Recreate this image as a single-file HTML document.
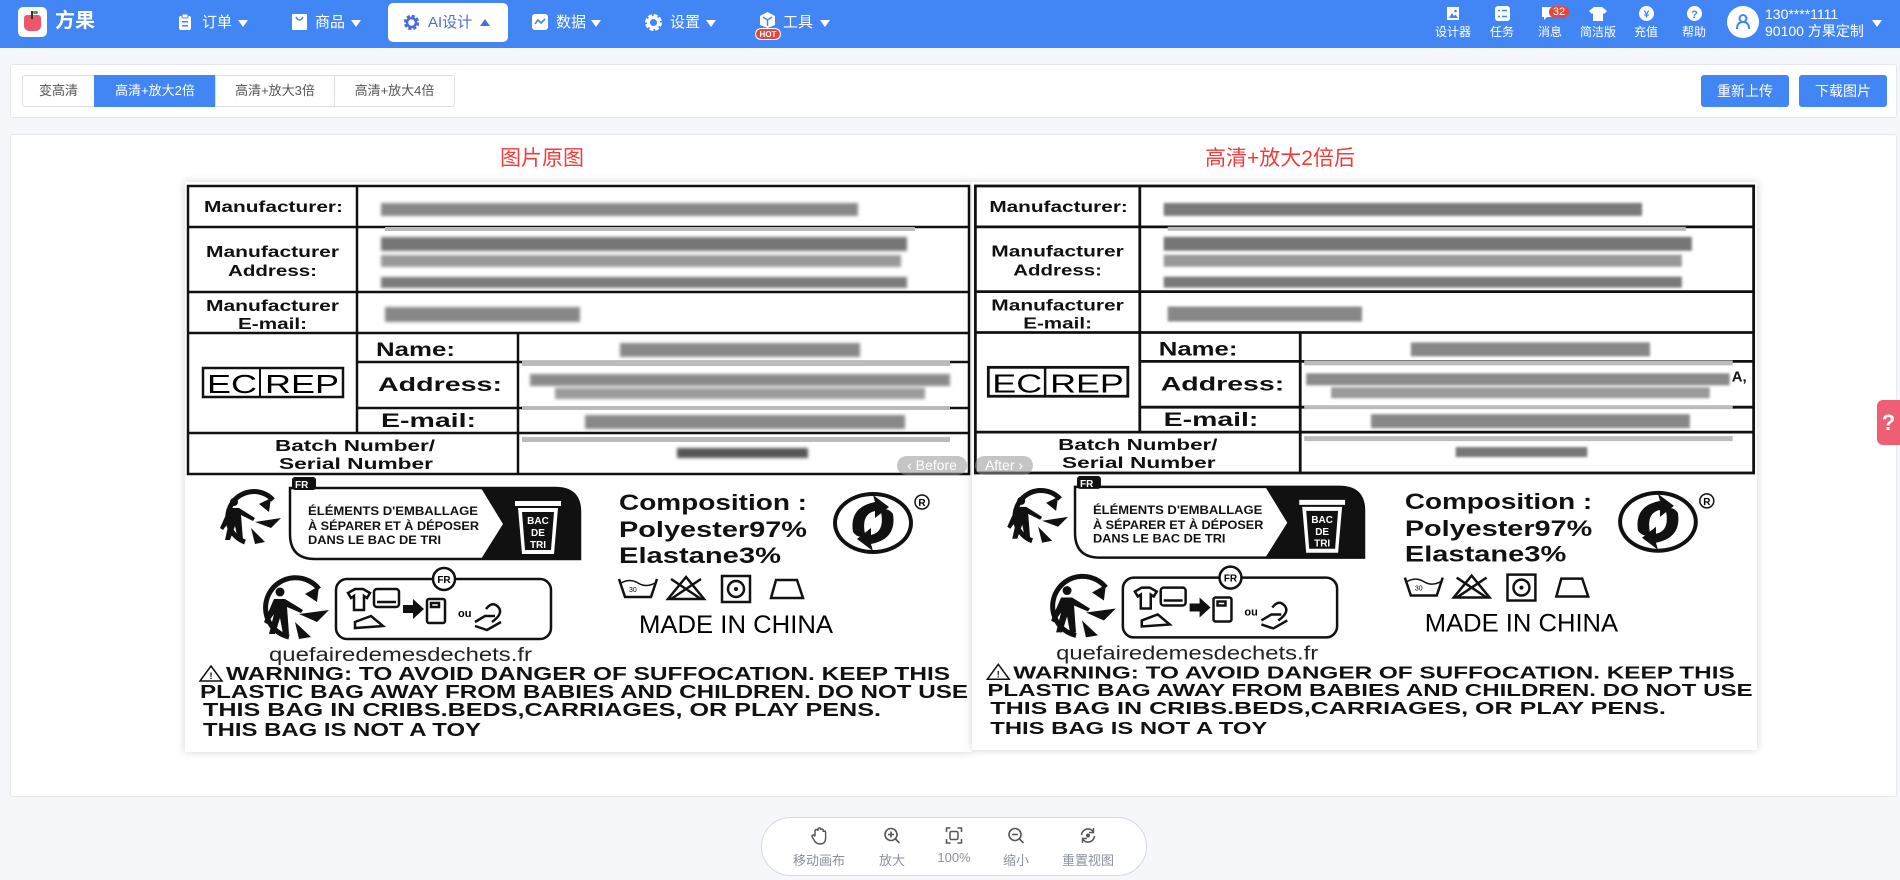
<!DOCTYPE html>
<html><head><meta charset="utf-8">
<style>
*{margin:0;padding:0;box-sizing:border-box}
body{width:1900px;height:880px;background:#f5f7fb;font-family:"Liberation Sans","Noto Sans CJK SC",sans-serif;position:relative;overflow:hidden}
.abs{position:absolute}
.nav{left:0;top:0;width:1900px;height:48px;background:#4285f4;color:#fff}
.nav .t{position:absolute;top:13px;font-size:15px;line-height:20px;color:#fff}
.arr{position:absolute;top:20px;width:0;height:0;border-left:5px solid transparent;border-right:5px solid transparent;border-top:7px solid #fff}
.ri{position:absolute;top:26px;font-size:12px;line-height:13px;color:#fff;transform:translateX(-50%);white-space:nowrap}
.panel{background:#fff;border:1px solid #e4e7ed;border-radius:3px}
.tab{position:absolute;top:75px;height:32px;line-height:30px;font-size:13px;color:#555;text-align:center;border:1px solid #dcdfe6;background:#fff}
.btn{position:absolute;top:75px;height:32px;line-height:32px;width:88px;background:#4285f4;color:#fff;font-size:14px;text-align:center;border-radius:3px}
.lbl{position:absolute;background:#fff;box-shadow:0 0 8px rgba(0,0,0,.18)}
.tb{position:absolute;top:850px;font-size:13px;color:#8a8f99;transform:translateX(-50%);white-space:nowrap}
.ti{position:absolute;top:827px;transform:translateX(-50%)}
</style></head><body>

<div class="abs nav">
  <div class="abs" style="left:18px;top:7px;width:29px;height:30px;background:#fff;border-radius:5px">
    <div class="abs" style="left:6px;top:8px;width:17px;height:16px;background:#f0566a;border-radius:3px 3px 5px 5px"></div>
    <div class="abs" style="left:13px;top:4px;width:2px;height:8px;background:#333"></div>
    <div class="abs" style="left:15px;top:4px;width:5px;height:3px;background:#3a3;border-radius:3px"></div>
  </div>
  <div class="t" style="left:55px;top:11px;font-size:20px;font-weight:bold">方果</div>

  <svg class="abs" style="left:178px;top:14px" width="14" height="17"><rect x="1" y="2" width="12" height="14" rx="2" fill="#fff"/><rect x="4" y="0" width="6" height="4" rx="1" fill="#fff" stroke="#4285f4"/><rect x="4" y="7" width="6" height="1.5" fill="#4285f4"/><rect x="4" y="11" width="6" height="1.5" fill="#4285f4"/></svg>
  <div class="t" style="left:202px">订单</div><div class="arr" style="left:238px"></div>

  <svg class="abs" style="left:292px;top:14px" width="15" height="16"><rect x="0" y="0" width="15" height="16" rx="1" fill="#fff"/><path d="M4 3 Q7.5 9 11 3" stroke="#4285f4" stroke-width="1.6" fill="none"/></svg>
  <div class="t" style="left:315px">商品</div><div class="arr" style="left:351px"></div>

  <div class="abs" style="left:388px;top:3px;width:120px;height:39px;background:#fff;border-radius:5px"></div>
  <svg class="abs" style="left:404px;top:15px" width="15" height="15"><circle cx="7.5" cy="7.5" r="6" fill="none" stroke="#4a6ee0" stroke-width="3.5" stroke-dasharray="3 1.7"/><circle cx="7.5" cy="7.5" r="4.5" fill="none" stroke="#4a6ee0" stroke-width="2.5"/></svg>
  <div class="t" style="left:428px;color:#4a6ee0">AI设计</div>
  <div class="abs" style="left:480px;top:19px;width:0;height:0;border-left:5px solid transparent;border-right:5px solid transparent;border-bottom:7px solid #4a6ee0"></div>

  <svg class="abs" style="left:532px;top:14px" width="16" height="16"><rect width="16" height="16" rx="3" fill="#fff"/><path d="M3 10 L6 6 L9 9 L13 5" stroke="#4285f4" stroke-width="1.6" fill="none"/></svg>
  <div class="t" style="left:556px">数据</div><div class="arr" style="left:591px"></div>

  <svg class="abs" style="left:645px;top:14px" width="17" height="17"><circle cx="8.5" cy="8.5" r="6.5" fill="none" stroke="#fff" stroke-width="4" stroke-dasharray="3.5 1.6"/><circle cx="8.5" cy="8.5" r="5" fill="none" stroke="#fff" stroke-width="3"/></svg>
  <div class="t" style="left:670px">设置</div><div class="arr" style="left:706px"></div>

  <svg class="abs" style="left:759px;top:11px" width="17" height="18"><path d="M8.5 1 L16 5 L16 14 L8.5 17 L1 14 L1 5 Z" fill="#fff"/><path d="M4 6 L8.5 9 L13 6 M8.5 9 V15" stroke="#4285f4" stroke-width="1.5" fill="none"/></svg>
  <div class="abs" style="left:755px;top:28px;width:26px;height:12px;background:#e8453c;border-radius:6px;font-size:8px;font-weight:bold;color:#fff;text-align:center;line-height:12px;border:1px solid #fff">HOT</div>
  <div class="t" style="left:783px">工具</div><div class="arr" style="left:820px"></div>

  <svg class="abs" style="left:1446px;top:6px" width="14" height="15"><rect x="1" y="1" width="12" height="13" fill="#fff"/><path d="M3 12 L6 7 L8 10 L9.5 8.5 L12 12Z" fill="#4285f4"/><circle cx="9.5" cy="5" r="1.3" fill="#4285f4"/></svg>
  <div class="ri" style="left:1453px">设计器</div>
  <svg class="abs" style="left:1495px;top:6px" width="15" height="15"><rect width="15" height="15" rx="3" fill="#fff"/><path d="M3 4.5h2M7 4.5h5M3 10.5h2M7 10.5h5" stroke="#4285f4" stroke-width="1.5"/></svg>
  <div class="ri" style="left:1502px">任务</div>
  <svg class="abs" style="left:1541px;top:6px" width="15" height="16"><path d="M1 1h13v10H6l-3 3v-3H1z" fill="#fff"/></svg>
  <div class="abs" style="left:1549px;top:6px;width:20px;height:12px;background:#e8453c;border-radius:7px;color:#fff;font-size:11px;line-height:12px;text-align:center">32</div>
  <div class="ri" style="left:1550px">消息</div>
  <svg class="abs" style="left:1589px;top:7px" width="18" height="14"><path d="M5 0 L13 0 L18 4 L15 7 L14 6 L14 14 L4 14 L4 6 L3 7 L0 4Z" fill="#fff"/></svg>
  <div class="ri" style="left:1598px">简洁版</div>
  <svg class="abs" style="left:1639px;top:6px" width="15" height="15"><circle cx="7.5" cy="7.5" r="7.5" fill="#fff"/><text x="7.5" y="11.5" font-size="10" font-weight="bold" fill="#4285f4" text-anchor="middle" font-family="Liberation Sans">¥</text></svg>
  <div class="ri" style="left:1646px">充值</div>
  <svg class="abs" style="left:1687px;top:6px" width="15" height="15"><circle cx="7.5" cy="7.5" r="7.5" fill="#fff"/><text x="7.5" y="12" font-size="11" font-weight="bold" fill="#4285f4" text-anchor="middle" font-family="Liberation Sans">?</text></svg>
  <div class="ri" style="left:1694px">帮助</div>

  <div class="abs" style="left:1727px;top:6px;width:32px;height:32px;border-radius:50%;background:#fff"></div>
  <svg class="abs" style="left:1735px;top:13px" width="16" height="17"><circle cx="8" cy="5.5" r="3.5" fill="none" stroke="#4285f4" stroke-width="2"/><path d="M2 16 Q2 9 8 9 Q14 9 14 16" fill="none" stroke="#4285f4" stroke-width="2"/></svg>
  <div class="abs" style="left:1765px;top:6px;font-size:14px;line-height:16px;color:#fff">130****1111</div>
  <div class="abs" style="left:1765px;top:23px;font-size:14px;line-height:16px;color:#fff">90100 方果定制</div>
  <div class="abs" style="left:1872px;top:20px;width:0;height:0;border-left:5px solid transparent;border-right:5px solid transparent;border-top:7px solid #fff"></div>
</div>

<div class="abs panel" style="left:10px;top:64px;width:1887px;height:54px"></div>
<div class="tab" style="left:22px;width:73px;border-radius:3px 0 0 3px">变高清</div>
<div class="tab" style="left:94px;width:122px;background:#4285f4;color:#fff;border-color:#4285f4">高清+放大2倍</div>
<div class="tab" style="left:215px;width:120px">高清+放大3倍</div>
<div class="tab" style="left:334px;width:121px;border-radius:0 3px 3px 0">高清+放大4倍</div>
<div class="btn" style="left:1701px">重新上传</div>
<div class="btn" style="left:1799px">下载图片</div>

<div class="abs panel" style="left:10px;top:134px;width:1887px;height:663px"></div>
<div class="abs" style="left:500px;top:147px;font-size:21px;line-height:24px;color:#f23b3b">图片原图</div>
<div class="abs" style="left:1205px;top:147px;font-size:21px;line-height:24px;color:#f23b3b">高清+放大2倍后</div>

<!-- LEFT LABEL -->
<div class="lbl" style="left:185px;top:182px;width:787px;height:570px">
<svg width="787" height="570" viewBox="0 0 787 570" font-family="Liberation Sans" font-weight="bold">
<defs><filter id="bl" x="-5%" y="-30%" width="110%" height="160%"><feGaussianBlur stdDeviation="1.6"/></filter></defs>
<g stroke="#111" stroke-width="2.5" fill="none">
<rect x="3" y="4" width="781" height="288"/>
<line x1="3" y1="45" x2="784" y2="45"/><line x1="3" y1="110" x2="784" y2="110"/><line x1="3" y1="151" x2="784" y2="151"/>
<line x1="172" y1="180" x2="784" y2="180"/><line x1="172" y1="226" x2="784" y2="226"/><line x1="3" y1="251" x2="784" y2="251"/>
<line x1="172" y1="4" x2="172" y2="251"/><line x1="333" y1="151" x2="333" y2="292"/>
</g>
<g fill="#111" font-size="16">
<text x="19" y="30" textLength="139" lengthAdjust="spacingAndGlyphs">Manufacturer:</text>
<text x="21" y="75" textLength="133" lengthAdjust="spacingAndGlyphs">Manufacturer</text>
<text x="43" y="94" textLength="89" lengthAdjust="spacingAndGlyphs">Address:</text>
<text x="21" y="129" textLength="133" lengthAdjust="spacingAndGlyphs">Manufacturer</text>
<text x="53" y="147" textLength="69" lengthAdjust="spacingAndGlyphs">E-mail:</text>
<text x="191" y="174" font-size="19" textLength="79" lengthAdjust="spacingAndGlyphs">Name:</text>
<text x="193" y="209" font-size="19" textLength="124" lengthAdjust="spacingAndGlyphs">Address:</text>
<text x="196" y="245" font-size="19" textLength="95" lengthAdjust="spacingAndGlyphs">E-mail:</text>
<text x="90" y="269" textLength="160" lengthAdjust="spacingAndGlyphs">Batch Number/</text>
<text x="94" y="287" textLength="154" lengthAdjust="spacingAndGlyphs">Serial Number</text>
</g>
<rect x="18" y="186" width="140" height="29" fill="none" stroke="#111" stroke-width="2.5"/><line x1="75" y1="186" x2="75" y2="215" stroke="#111" stroke-width="2"/>
<text x="22" y="211" font-size="26" font-weight="normal" textLength="50" lengthAdjust="spacingAndGlyphs">EC</text>
<text x="80" y="211" font-size="26" font-weight="normal" textLength="74" lengthAdjust="spacingAndGlyphs">REP</text>
<g filter="url(#bl)" fill="#888">
<rect x="196" y="21" width="477" height="13"/>
<rect x="196" y="55" width="526" height="14" fill="#777"/><rect x="196" y="73" width="520" height="12" fill="#999"/><rect x="196" y="95" width="526" height="11" fill="#7a7a7a"/>
<rect x="200" y="125" width="195" height="15"/>
<rect x="435" y="161" width="240" height="14"/>
<rect x="345" y="192" width="420" height="12" fill="#8a8a8a"/><rect x="370" y="206" width="370" height="11" fill="#9a9a9a"/>
<rect x="400" y="233" width="320" height="14"/>
<rect x="492" y="266" width="131" height="10" fill="#555"/>
</g>
<g fill="#bbb"><rect x="200" y="45" width="530" height="4"/><rect x="337" y="179" width="428" height="5"/><rect x="337" y="224" width="428" height="4"/><rect x="337" y="255" width="428" height="5"/></g>

<g fill="none" stroke="#111" stroke-width="5"><path d="M88 318 A26 26 0 1 0 60 360"/></g>
<g fill="#111"><circle cx="49" cy="320" r="4"/><path d="M44 326 L54 326 L70 336 L68 339 L56 333 L58 358 L53 358 L50 344 L45 358 L40 358 L44 340 L38 348 L35 346Z"/><path d="M74 322 L86 316 L84 330Z"/><path d="M70 340 L96 336 L86 346Z"/><path d="M66 346 L80 360 L70 362Z"/></g>
<path d="M113 306 H370 Q395 306 395 330 V377 H130 Q105 377 105 352 V306Z" fill="#fff" stroke="#111" stroke-width="2.5"/>
<path d="M296 306 H370 Q395 306 395 330 V377 H296 L318 342Z" fill="#111"/>
<rect x="107" y="295" width="24" height="13" rx="3" fill="#111"/>
<text x="110" y="306" font-size="10" fill="#fff">FR</text>
<g font-size="12" fill="#111">
<text x="123" y="333" textLength="170" lengthAdjust="spacingAndGlyphs">ÉLÉMENTS D'EMBALLAGE</text>
<text x="123" y="348" textLength="171" lengthAdjust="spacingAndGlyphs">À SÉPARER ET À DÉPOSER</text>
<text x="123" y="362" textLength="133" lengthAdjust="spacingAndGlyphs">DANS LE BAC DE TRI</text>
</g>
<rect x="330" y="319" width="46" height="5" fill="#fff"/><path d="M333 326 H373 L369 372 H337Z" fill="#fff"/><path d="M337 330 H369 L366 368 H340Z" fill="#111"/>
<g font-size="10" fill="#fff" text-anchor="middle"><text x="353" y="342">BAC</text><text x="353" y="354">DE</text><text x="353" y="366">TRI</text></g>
<g fill="#111" font-size="22">
<text x="434" y="328" textLength="188" lengthAdjust="spacingAndGlyphs">Composition :</text>
<text x="434" y="355" textLength="188" lengthAdjust="spacingAndGlyphs">Polyester97%</text>
<text x="434" y="381" textLength="162" lengthAdjust="spacingAndGlyphs">Elastane3%</text>
</g>
<ellipse cx="688" cy="341" rx="40" ry="31" fill="#111"/><ellipse cx="688" cy="341" rx="36" ry="27" fill="#fff"/>
<path d="M668 350 Q664 325 690 320 L688 313 L704 325 L690 336 L690 329 Q676 332 680 352 Q674 358 668 350Z" fill="#111"/>
<path d="M708 332 Q712 357 686 362 L688 369 L672 357 L686 346 L686 353 Q700 350 696 330 Q702 324 708 332Z" fill="#111"/>
<circle cx="737" cy="320" r="7" fill="none" stroke="#111" stroke-width="1.5"/><text x="737" y="324" font-size="10" text-anchor="middle">R</text>
<g fill="none" stroke="#111" stroke-width="2.5">
<path d="M434 397 L440 415 H466 L472 397"/><path d="M436 401 Q445 396 453 401 Q461 406 470 401" stroke-width="1.5"/>
<path d="M501 395 L483 417 H519Z"/><path d="M486 397 L516 417 M516 397 L486 417"/>
<rect x="537" y="394" width="28" height="26"/><circle cx="551" cy="407" r="8"/>
<path d="M586 416 L591 398 H612 L618 416Z"/>
</g>
<circle cx="551" cy="407" r="2" fill="#111"/>
<text x="444" y="410" font-size="7" font-weight="normal">30</text>
<text x="454" y="451" font-size="25" font-weight="normal" textLength="194" lengthAdjust="spacingAndGlyphs">MADE IN CHINA</text>
<g fill="none" stroke="#111" stroke-width="5"><path d="M134 407 A30 30 0 1 0 104 455"/></g>
<g fill="#111"><circle cx="95" cy="410" r="4.5"/><path d="M89 417 L100 417 L118 428 L116 431 L102 425 L104 452 L98 452 L95 436 L90 452 L84 452 L89 432 L82 442 L79 440Z"/><path d="M120 412 L134 404 L132 420Z"/><path d="M114 432 L144 428 L132 440Z"/><path d="M110 440 L126 455 L114 457Z"/></g>
<rect x="151" y="397" width="215" height="60" rx="11" fill="#fff" stroke="#111" stroke-width="2.5"/>
<circle cx="259" cy="397" r="11" fill="#fff" stroke="#111" stroke-width="2.5"/><text x="259" y="401" font-size="10" text-anchor="middle">FR</text>
<g fill="none" stroke="#111" stroke-width="2.5">
<path d="M163 411 L170 407 H178 L185 411 L182 416 L179 414 V428 H169 V414 L166 416Z"/>
<rect x="189" y="407" width="25" height="18" rx="3"/><line x1="192" y1="420" x2="211" y2="420"/>
<path d="M170 440 L186 434 L198 444 L170 446Z"/>
<rect x="242" y="417" width="18" height="24" rx="2"/><rect x="246" y="421" width="8" height="4"/>
<path d="M301 427 Q308 418 314 426 Q318 432 307 440 M290 440 L300 434 H310 M290 444 L302 448 L316 440"/>
</g>
<path d="M218 423 H228 V417 L239 427 L228 437 V431 H218Z" fill="#111"/>
<text x="273" y="435" font-size="11">ou</text>
<text x="84" y="479" font-size="19" font-weight="normal" fill="#222" textLength="263" lengthAdjust="spacingAndGlyphs">quefairedemesdechets.fr</text>
<path d="M26 484 L37 499 H15Z" fill="none" stroke="#111" stroke-width="1.5"/><text x="24.5" y="497" font-size="9">!</text>
<g font-size="18" fill="#111">
<text x="41" y="498" textLength="724" lengthAdjust="spacingAndGlyphs">WARNING: TO AVOID DANGER OF SUFFOCATION. KEEP THIS</text>
<text x="15" y="516" textLength="768" lengthAdjust="spacingAndGlyphs">PLASTIC BAG AWAY FROM BABIES AND CHILDREN. DO NOT USE</text>
<text x="18" y="534" textLength="678" lengthAdjust="spacingAndGlyphs">THIS BAG IN CRIBS.BEDS,CARRIAGES, OR PLAY PENS.</text>
<text x="18" y="554" textLength="278" lengthAdjust="spacingAndGlyphs">THIS BAG IS NOT A TOY</text>
</g>
</svg>
</div>

<!-- RIGHT LABEL -->
<div class="lbl" style="left:972px;top:182px;width:785px;height:568px">
<svg width="785" height="568" viewBox="0 0 787 570" font-family="Liberation Sans" font-weight="bold">
<defs><filter id="bl2" x="-5%" y="-30%" width="110%" height="160%"><feGaussianBlur stdDeviation="1.4"/></filter></defs>
<g stroke="#111" stroke-width="2.8" fill="none">
<rect x="3" y="4" width="781" height="288"/>
<line x1="3" y1="45" x2="784" y2="45"/><line x1="3" y1="110" x2="784" y2="110"/><line x1="3" y1="151" x2="784" y2="151"/>
<line x1="168" y1="180" x2="784" y2="180"/><line x1="168" y1="226" x2="784" y2="226"/><line x1="3" y1="251" x2="784" y2="251"/>
<line x1="168" y1="4" x2="168" y2="251"/><line x1="329" y1="151" x2="329" y2="292"/>
</g>
<g fill="#111" font-size="16">
<text x="17" y="30" textLength="139" lengthAdjust="spacingAndGlyphs">Manufacturer:</text>
<text x="19" y="75" textLength="133" lengthAdjust="spacingAndGlyphs">Manufacturer</text>
<text x="41" y="94" textLength="89" lengthAdjust="spacingAndGlyphs">Address:</text>
<text x="19" y="129" textLength="133" lengthAdjust="spacingAndGlyphs">Manufacturer</text>
<text x="51" y="147" textLength="69" lengthAdjust="spacingAndGlyphs">E-mail:</text>
<text x="187" y="174" font-size="19" textLength="79" lengthAdjust="spacingAndGlyphs">Name:</text>
<text x="189" y="209" font-size="19" textLength="124" lengthAdjust="spacingAndGlyphs">Address:</text>
<text x="192" y="245" font-size="19" textLength="95" lengthAdjust="spacingAndGlyphs">E-mail:</text>
<text x="86" y="269" textLength="160" lengthAdjust="spacingAndGlyphs">Batch Number/</text>
<text x="90" y="287" textLength="154" lengthAdjust="spacingAndGlyphs">Serial Number</text>
</g>
<rect x="16" y="186" width="140" height="29" fill="none" stroke="#111" stroke-width="2.8"/><line x1="73" y1="186" x2="73" y2="215" stroke="#111" stroke-width="2.5"/>
<text x="20" y="211" font-size="26" font-weight="normal" textLength="50" lengthAdjust="spacingAndGlyphs">EC</text>
<text x="78" y="211" font-size="26" font-weight="normal" textLength="74" lengthAdjust="spacingAndGlyphs">REP</text>
<g filter="url(#bl2)" fill="#888">
<rect x="192" y="21" width="480" height="13" fill="#7a7a7a"/>
<rect x="192" y="55" width="530" height="14" fill="#777"/><rect x="192" y="73" width="520" height="12" fill="#999"/><rect x="192" y="95" width="520" height="11" fill="#7a7a7a"/>
<rect x="196" y="125" width="195" height="15"/>
<rect x="440" y="161" width="240" height="14"/>
<rect x="335" y="192" width="425" height="12" fill="#8a8a8a"/><rect x="360" y="206" width="380" height="11" fill="#9a9a9a"/>
<rect x="400" y="233" width="320" height="14"/>
<rect x="485" y="266" width="132" height="10" fill="#777"/>
</g>
<text x="762" y="200" font-size="15" fill="#111">A,</text>
<g fill="#bbb"><rect x="196" y="45" width="520" height="4"/><rect x="333" y="179" width="430" height="5"/><rect x="333" y="224" width="430" height="4"/><rect x="333" y="255" width="430" height="5"/></g>
<g fill="none" stroke="#111" stroke-width="5"><path d="M88 318 A26 26 0 1 0 60 360"/></g>
<g fill="#111"><circle cx="49" cy="320" r="4"/><path d="M44 326 L54 326 L70 336 L68 339 L56 333 L58 358 L53 358 L50 344 L45 358 L40 358 L44 340 L38 348 L35 346Z"/><path d="M74 322 L86 316 L84 330Z"/><path d="M70 340 L96 336 L86 346Z"/><path d="M66 346 L80 360 L70 362Z"/></g>
<path d="M111 306 H368 Q393 306 393 330 V377 H128 Q103 377 103 352 V306Z" fill="#fff" stroke="#111" stroke-width="2.5"/>
<path d="M294 306 H368 Q393 306 393 330 V377 H294 L316 342Z" fill="#111"/>
<rect x="105" y="295" width="24" height="13" rx="3" fill="#111"/>
<text x="108" y="306" font-size="10" fill="#fff">FR</text>
<g font-size="12" fill="#111">
<text x="121" y="333" textLength="170" lengthAdjust="spacingAndGlyphs">ÉLÉMENTS D'EMBALLAGE</text>
<text x="121" y="348" textLength="171" lengthAdjust="spacingAndGlyphs">À SÉPARER ET À DÉPOSER</text>
<text x="121" y="362" textLength="133" lengthAdjust="spacingAndGlyphs">DANS LE BAC DE TRI</text>
</g>
<rect x="328" y="319" width="46" height="5" fill="#fff"/><path d="M331 326 H371 L367 372 H335Z" fill="#fff"/><path d="M335 330 H367 L364 368 H338Z" fill="#111"/>
<g font-size="10" fill="#fff" text-anchor="middle"><text x="351" y="342">BAC</text><text x="351" y="354">DE</text><text x="351" y="366">TRI</text></g>
<g fill="#111" font-size="22">
<text x="434" y="328" textLength="188" lengthAdjust="spacingAndGlyphs">Composition :</text>
<text x="434" y="355" textLength="188" lengthAdjust="spacingAndGlyphs">Polyester97%</text>
<text x="434" y="381" textLength="162" lengthAdjust="spacingAndGlyphs">Elastane3%</text>
</g>
<ellipse cx="688" cy="341" rx="40" ry="31" fill="#111"/><ellipse cx="688" cy="341" rx="36" ry="27" fill="#fff"/>
<path d="M668 350 Q664 325 690 320 L688 313 L704 325 L690 336 L690 329 Q676 332 680 352 Q674 358 668 350Z" fill="#111"/>
<path d="M708 332 Q712 357 686 362 L688 369 L672 357 L686 346 L686 353 Q700 350 696 330 Q702 324 708 332Z" fill="#111"/>
<circle cx="737" cy="320" r="7" fill="none" stroke="#111" stroke-width="1.5"/><text x="737" y="324" font-size="10" text-anchor="middle">R</text>
<g fill="none" stroke="#111" stroke-width="2.5">
<path d="M434 397 L440 415 H466 L472 397"/><path d="M436 401 Q445 396 453 401 Q461 406 470 401" stroke-width="1.5"/>
<path d="M501 395 L483 417 H519Z"/><path d="M486 397 L516 417 M516 397 L486 417"/>
<rect x="537" y="394" width="28" height="26"/><circle cx="551" cy="407" r="8"/>
<path d="M586 416 L591 398 H612 L618 416Z"/>
</g>
<circle cx="551" cy="407" r="2" fill="#111"/>
<text x="444" y="410" font-size="7" font-weight="normal">30</text>
<text x="454" y="451" font-size="25" font-weight="normal" textLength="194" lengthAdjust="spacingAndGlyphs">MADE IN CHINA</text>
<g fill="none" stroke="#111" stroke-width="5"><path d="M134 407 A30 30 0 1 0 104 455"/></g>
<g fill="#111"><circle cx="95" cy="410" r="4.5"/><path d="M89 417 L100 417 L118 428 L116 431 L102 425 L104 452 L98 452 L95 436 L90 452 L84 452 L89 432 L82 442 L79 440Z"/><path d="M120 412 L134 404 L132 420Z"/><path d="M114 432 L144 428 L132 440Z"/><path d="M110 440 L126 455 L114 457Z"/></g>
<rect x="151" y="397" width="215" height="60" rx="11" fill="#fff" stroke="#111" stroke-width="2.5"/>
<circle cx="259" cy="397" r="11" fill="#fff" stroke="#111" stroke-width="2.5"/><text x="259" y="401" font-size="10" text-anchor="middle">FR</text>
<g fill="none" stroke="#111" stroke-width="2.5">
<path d="M163 411 L170 407 H178 L185 411 L182 416 L179 414 V428 H169 V414 L166 416Z"/>
<rect x="189" y="407" width="25" height="18" rx="3"/><line x1="192" y1="420" x2="211" y2="420"/>
<path d="M170 440 L186 434 L198 444 L170 446Z"/>
<rect x="242" y="417" width="18" height="24" rx="2"/><rect x="246" y="421" width="8" height="4"/>
<path d="M301 427 Q308 418 314 426 Q318 432 307 440 M290 440 L300 434 H310 M290 444 L302 448 L316 440"/>
</g>
<path d="M218 423 H228 V417 L239 427 L228 437 V431 H218Z" fill="#111"/>
<text x="273" y="435" font-size="11">ou</text>
<text x="84" y="479" font-size="19" font-weight="normal" fill="#222" textLength="263" lengthAdjust="spacingAndGlyphs">quefairedemesdechets.fr</text>
<path d="M26 484 L37 499 H15Z" fill="none" stroke="#111" stroke-width="1.5"/><text x="24.5" y="497" font-size="9">!</text>
<g font-size="18" fill="#111">
<text x="41" y="498" textLength="724" lengthAdjust="spacingAndGlyphs">WARNING: TO AVOID DANGER OF SUFFOCATION. KEEP THIS</text>
<text x="15" y="516" textLength="768" lengthAdjust="spacingAndGlyphs">PLASTIC BAG AWAY FROM BABIES AND CHILDREN. DO NOT USE</text>
<text x="18" y="534" textLength="678" lengthAdjust="spacingAndGlyphs">THIS BAG IN CRIBS.BEDS,CARRIAGES, OR PLAY PENS.</text>
<text x="18" y="554" textLength="278" lengthAdjust="spacingAndGlyphs">THIS BAG IS NOT A TOY</text>
</g>
</svg>
</div>

<div class="abs" style="left:897px;top:456px;width:70px;height:19px;border-radius:10px;background:rgba(150,150,150,.55);color:#fff;font-size:14px;line-height:19px;text-align:center">‹ Before</div>
<div class="abs" style="left:975px;top:456px;width:58px;height:19px;border-radius:10px;background:rgba(150,150,150,.55);color:#fff;font-size:14px;line-height:19px;text-align:center">After ›</div>

<div class="abs" style="left:1877px;top:400px;width:23px;height:45px;background:#ef5f73;border-radius:6px 0 0 6px;color:#fff;font-weight:bold;font-size:22px;line-height:45px;text-align:center">?</div>

<div class="abs" style="left:761px;top:817px;width:386px;height:59px;background:#fff;border:1px solid #d5d8de;border-radius:30px"></div>
<svg class="ti" style="left:819px" width="16" height="18"><path d="M4 9 V4 Q4 2.5 5.5 2.5 Q7 2.5 7 4 V2 Q7 0.8 8.3 0.8 Q9.6 0.8 9.6 2 V3 Q9.6 2 11 2 Q12.2 2 12.2 3.5 V5 Q12.2 4 13.5 4 Q14.6 4 14.6 5.5 V11 Q14.6 17 9 17 Q5 17 3 13 L1 9.5 Q0.8 8 2.3 8 Q3 8 4 9.5" fill="none" stroke="#555" stroke-width="1.4"/></svg>
<div class="tb" style="left:819px">移动画布</div>
<svg class="ti" style="left:892px" width="17" height="17"><circle cx="7.5" cy="7.5" r="6" fill="none" stroke="#555" stroke-width="1.6"/><path d="M12 12 L16 16 M7.5 4.5 V10.5 M4.5 7.5 H10.5" stroke="#555" stroke-width="1.6"/></svg>
<div class="tb" style="left:892px">放大</div>
<svg class="ti" style="left:954px" width="17" height="17"><path d="M1 5 V1 H5 M12 1 H16 V5 M16 12 V16 H12 M5 16 H1 V12" fill="none" stroke="#555" stroke-width="1.5"/><rect x="4.5" y="4.5" width="8" height="8" rx="1.5" fill="none" stroke="#555" stroke-width="1.5"/></svg>
<div class="tb" style="left:954px">100%</div>
<svg class="ti" style="left:1016px" width="17" height="17"><circle cx="7.5" cy="7.5" r="6" fill="none" stroke="#555" stroke-width="1.6"/><path d="M12 12 L16 16 M4.5 7.5 H10.5" stroke="#555" stroke-width="1.6"/></svg>
<div class="tb" style="left:1016px">缩小</div>
<svg class="ti" style="left:1088px" width="17" height="17"><path d="M2 8 A6.5 6.5 0 0 1 14 5 M15 9 A6.5 6.5 0 0 1 3 12" fill="none" stroke="#555" stroke-width="1.6"/><path d="M14 1 V5.5 H9.5 M3 16 V11.5 H7.5" fill="none" stroke="#555" stroke-width="1.4"/><circle cx="8.5" cy="8.5" r="2" fill="#555"/></svg>
<div class="tb" style="left:1088px">重置视图</div>
</body></html>
